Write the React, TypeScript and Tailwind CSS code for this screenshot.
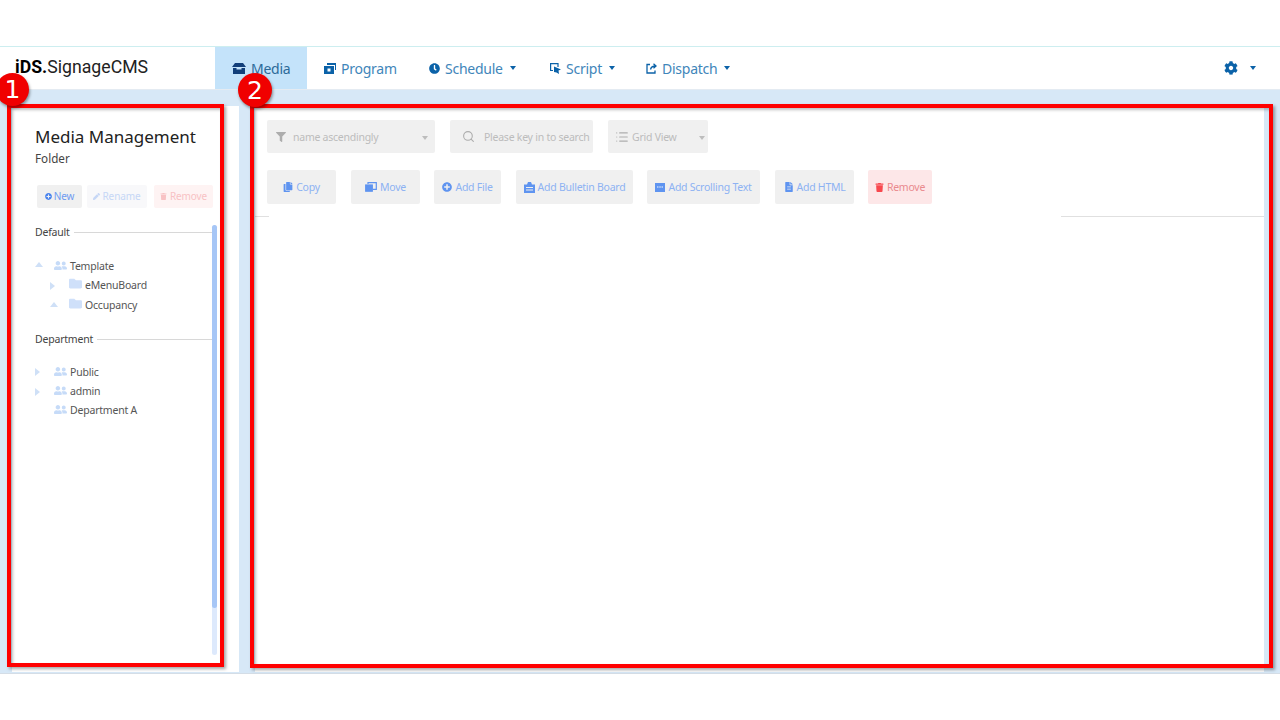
import React from 'react';
import { Search, List } from 'lucide-react';
import { FaClock, FaCog, FaCopy, FaFileAlt, FaFilter, FaFolder, FaPlusCircle, FaTrash, FaUserFriends, FaPen } from 'react-icons/fa';

const navItems = [
  { label: 'Program', caret: false, width: 'w-[105px]' },
  { label: 'Schedule', caret: true, width: 'w-[120px]' },
  { label: 'Script', caret: true, width: 'w-[97px]' },
  { label: 'Dispatch', caret: true, width: 'w-[110px]' },
];

const Caret = ({ className }: { className: string }) => (
  <span className={`inline-block h-0 w-0 shrink-0 border-x-[3.5px] border-t-[4px] border-x-transparent ${className}`} />
);

const TreeArrow = ({ dir }: { dir: 'up' | 'right' }) =>
  dir === 'up' ? (
    <span className="inline-block h-0 w-0 border-x-[4px] border-b-[5px] border-x-transparent border-b-[#cfe0f7]" />
  ) : (
    <span className="inline-block h-0 w-0 border-y-[4px] border-l-[5px] border-y-transparent border-l-[#cfe0f7]" />
  );

const MediaIcon = () => (
  <svg width="14" height="11" viewBox="0 0 14 11" fill="#123f7a" className="shrink-0">
    <path d="M3 0h8l3 4H0z" />
    <path d="M1 5h3.5v1.5h5V5H13v6H1z" />
  </svg>
);

const NavIcon = ({ label }: { label: string }) => {
  if (label === 'Program') {
    return (
      <svg width="12" height="11" viewBox="0 0 12 11" className="shrink-0 text-[#0b62a8]" fill="currentColor">
        <path d="M3 0h9v7h-1V2H3z" />
        <path d="M0 3h10v8H0zM3.5 5.500v3h3v-3z" fillRule="evenodd" />
      </svg>
    );
  }
  if (label === 'Schedule') return <FaClock size={11} className="shrink-0 text-[#0b62a8]" />;
  if (label === 'Script') {
    return (
      <svg width="11" height="11" viewBox="0 0 11 11" fill="none" className="ml-px shrink-0 text-[#0b62a8]">
        <path d="M3 7.500H.6V.6h7.400V4" stroke="currentColor" strokeWidth="1.2" />
        <path d="M4 3.500l7 3-2.500 1 .5 3.500-2.500-1.500L4 9z" fill="currentColor" />
      </svg>
    );
  }
  return (
    <svg width="11" height="11" viewBox="0 0 11 11" fill="none" stroke="currentColor" strokeWidth="1.3" className="shrink-0 text-[#0b62a8]">
      <path d="M4 1.500H1v8.500h8V7.500" />
      <path d="M4.500 6.500c.5-2.500 2-3.500 5-3.500M7.500.8L10 3 7.500 5.200" />
    </svg>
  );
};

const Bulletin = () => (
  <svg width="11" height="11" viewBox="0 0 11 11" fill="currentColor">
    <path d="M4 0h3l1 2.500h3V11H0V2.500h3z" />
    <path d="M2 5h7v1H2zM2 7.500h7v1H2z" fill="#f0f0f0" />
  </svg>
);

const Marquee = () => (
  <svg width="10" height="9" viewBox="0 0 10 9" fill="currentColor">
    <path d="M0 0h10v9H0z" />
    <path d="M2 3h1.500v2H2zM4.300 3h1.500v2H4.300zM6.500 3H8v2H6.500z" fill="#a9c6f7" />
  </svg>
);

const MoveIcon = () => (
  <svg width="12" height="10" viewBox="0 0 12 10" fill="none" stroke="currentColor" strokeWidth="1.2">
    <path d="M3 2V.7h8.300v6.600H8" />
    <rect x="0.700" y="3" width="6.600" height="6.200" fill="currentColor" />
  </svg>
);

const toolButtons = [
  { label: 'Copy', icon: <FaCopy size={10} />, width: 'w-[69px]', gap: 'mr-[15px]' },
  { label: 'Move', icon: <MoveIcon />, width: 'w-[69px]', gap: 'mr-[14px]' },
  { label: 'Add File', icon: <FaPlusCircle size={10} />, width: 'w-[67px]', gap: 'mr-[15px]' },
  { label: 'Add Bulletin Board', icon: <Bulletin />, width: 'w-[117px]', gap: 'mr-[14px]' },
  { label: 'Add Scrolling Text', icon: <Marquee />, width: 'w-[113px]', gap: 'mr-[15px]' },
  { label: 'Add HTML', icon: <FaFileAlt size={10} />, width: 'w-[79px]', gap: 'mr-[14px]' },
];

const App = () => {
  return (
    <div className="relative flex h-[720px] w-[1280px] flex-col overflow-hidden bg-white font-['Noto_Sans',sans-serif]">
      <div className="box-content h-[46px] shrink-0 border-b border-[#cdeef0]" />

      {/* top nav */}
      <div className="flex h-[43px] shrink-0 items-center border-b border-[#e4ebf2] bg-white">
        <div className="w-[215px] pb-[2px] pl-[15px] font-['Roboto',sans-serif] text-[17.7px] text-[#222]">
          <span className="font-bold text-black">iDS.</span>SignageCMS
        </div>
        <div className="flex h-full w-[92px] items-center gap-[5px] bg-[#c4e3fa] pl-[17px] text-[14px] tracking-[-0.25px] text-[#2c6a99]">
          <MediaIcon />
          Media
        </div>
        {navItems.map((item) => (
          <div key={item.label} className={`flex h-full items-center pl-[17px] text-[14px] tracking-[-0.25px] text-[#3f86ba] ${item.width}`}>
            <NavIcon label={item.label} />
            <span className="ml-[5px]">{item.label}</span>
            {item.caret && <Caret className="ml-[7px] border-t-[#0b62a8]" />}
          </div>
        ))}
        <div className="ml-auto flex items-center pr-[24px]">
          <FaCog size={14} className="text-[#0b62a8]" />
          <Caret className="ml-[12px] border-t-[#0b62a8]" />
        </div>
      </div>

      {/* body */}
      <div className="flex h-[584px] shrink-0 gap-[16px] border-b border-[#d4dde6] bg-[#d7e8f7] pb-px pl-[12px] pr-[16px] pt-[16px]">
        <aside className="relative flex w-[227px] flex-col bg-white pl-[23px] pt-[17px]">
          <h1 className="text-[17px] leading-[27px] text-[#222]">Media Management</h1>
          <p className="text-[11.700px] leading-[16px] text-[#444]">Folder</p>

          <div className="mt-[19px] flex text-[10px] tracking-[-0.1px]">
            <div className="ml-[2px] flex h-[23px] w-[45px] items-center justify-center gap-[2px] rounded-[2px] bg-[#f0f0f0] text-[#6f9bf0]">
              <FaPlusCircle size={7} className="text-[#4a84ee]" />
              New
            </div>
            <div className="ml-[5px] flex h-[23px] w-[60px] items-center justify-center gap-[2px] rounded-[2px] bg-[#f8f8fa] text-[#c6d7f6]">
              <FaPen size={7} />
              Rename
            </div>
            <div className="ml-[7px] flex h-[23px] w-[59px] items-center justify-center gap-[3px] rounded-[2px] bg-[#fef3f3] text-[#f8c2c4]">
              <FaTrash size={7} />
              Remove
            </div>
          </div>

          <div className="mt-[16px] flex items-center text-[10.500px] leading-[16px] tracking-[-0.2px] text-[#444]">
            Default
            <div className="ml-[4px] h-px w-[139px] bg-[#d8d8d8]" />
          </div>

          <div className="mt-[17px] flex flex-col text-[10.500px] tracking-[-0.2px] text-[#555]">
            <div className="flex h-[19px] items-center">
              <span className="flex w-[19px] -translate-y-[2px]"><TreeArrow dir="up" /></span>
              <FaUserFriends size={13} className="mr-[3px] -translate-y-px text-[#c6dbf8]" />
              Template
            </div>
            <div className="flex h-[19px] items-center pl-[15px]">
              <span className="flex w-[19px]"><TreeArrow dir="right" /></span>
              <FaFolder size={13} className="mr-[3px] -translate-y-[2px] text-[#cfe0fa]" />
              eMenuBoard
            </div>
            <div className="flex h-[21px] items-center pl-[15px]">
              <span className="flex w-[19px] -translate-y-[1px]"><TreeArrow dir="up" /></span>
              <FaFolder size={13} className="mr-[3px] -translate-y-[2px] text-[#cfe0fa]" />
              Occupancy
            </div>
          </div>

          <div className="mt-[15px] flex items-center text-[10.500px] leading-[16px] tracking-[-0.2px] text-[#444]">
            Department
            <div className="ml-[4px] h-px w-[116px] bg-[#d8d8d8]" />
          </div>

          <div className="mt-[16px] flex flex-col text-[10.500px] tracking-[-0.2px] text-[#555]">
            <div className="flex h-[19px] items-center">
              <span className="flex w-[19px] -translate-y-[1px]"><TreeArrow dir="right" /></span>
              <FaUserFriends size={13} className="mr-[3px] -translate-y-px text-[#c6dbf8]" />
              Public
            </div>
            <div className="flex h-[19px] items-center">
              <span className="flex w-[19px]"><TreeArrow dir="right" /></span>
              <FaUserFriends size={13} className="mr-[3px] -translate-y-px text-[#c6dbf8]" />
              admin
            </div>
            <div className="flex h-[19px] items-center pl-[19px]">
              <FaUserFriends size={13} className="mr-[3px] -translate-y-px text-[#c6dbf8]" />
              Department A
            </div>
          </div>

          {/* scroll bar */}
          <div className="absolute left-[200px] top-[119px] h-[430px] w-[5px] rounded-full bg-[#dde9fc]">
            <div className="h-[383px] w-full rounded-full bg-[#a6c6f6]" />
          </div>
        </aside>

        <main className="flex flex-1 flex-col bg-white pl-[12px] pt-[14px]">
          <div className="flex h-[33px] text-[10.500px] tracking-[-0.25px] text-[#bcbcbc]">
            <div className="flex h-full w-[168px] items-center rounded-[2px] bg-[#f0f0f0] pl-[9px] pt-[2px]">
              <FaFilter size={10} className="-translate-y-px shrink-0 text-[#adadad]" />
              <span className="ml-[7px]">name ascendingly</span>
              <Caret className="ml-auto mr-[7px] border-t-[#bdbdbd]" />
            </div>
            <div className="ml-[15px] flex h-full w-[143px] items-center rounded-[2px] bg-[#f0f0f0] pl-[12px] pt-[2px]">
              <Search size={13} className="-translate-y-px shrink-0 text-[#adadad]" />
              <span className="ml-[9px] whitespace-nowrap">Please key in to search</span>
            </div>
            <div className="ml-[15px] flex h-full w-[100px] items-center rounded-[2px] bg-[#f0f0f0] pl-[7px] pt-[2px]">
              <List size={14} className="-translate-y-px shrink-0 text-[#adadad]" />
              <span className="ml-[3px]">Grid View</span>
              <Caret className="ml-auto mr-[3px] border-t-[#bdbdbd]" />
            </div>
          </div>

          <div className="mt-[17px] flex h-[34px] text-[10.500px] tracking-[-0.25px]">
            {toolButtons.map((b) => (
              <div
                key={b.label}
                className={`flex h-full items-center justify-center gap-[3px] rounded-[2px] bg-[#f0f0f0] pt-[2px] text-[#8db2f3] ${b.width} ${b.gap}`}
              >
                <span className="flex -translate-y-px text-[#5f94f0]">{b.icon}</span>
                {b.label}
              </div>
            ))}
            <div className="flex h-full w-[64px] items-center justify-center gap-[3px] rounded-[2px] bg-[#fde7e8] pt-[2px] text-[#ea8a8e]">
              <FaTrash size={9} className="-translate-y-px text-[#f8484e]" />
              Remove
            </div>
          </div>

          <div className="mt-[12px] flex">
            <div className="ml-[-12px] h-px w-[14px] bg-[#e0e0e0]" />
            <div className="ml-[792px] h-px w-[203px] bg-[#e0e0e0]" />
          </div>
        </main>
      </div>

      {/* red callouts over the page */}
      <div className="absolute left-[7px] top-[104px] h-[563px] w-[217px] border-4 border-[#ff0000] shadow-[2px_2px_3px_rgba(0,0,0,0.35),inset_2px_2px_3px_rgba(0,0,0,0.25)]" />
      <div className="absolute left-[250px] top-[104px] h-[564px] w-[1023px] border-4 border-[#ff0000] shadow-[2px_2px_3px_rgba(0,0,0,0.35),inset_2px_2px_3px_rgba(0,0,0,0.25)]" />
      <div className="absolute left-[-4px] top-[73px] flex h-[33px] w-[33px] items-center justify-center rounded-full bg-[#f00000] font-['DejaVu_Sans',sans-serif] text-[25px] leading-none text-white shadow-[1px_2px_3px_rgba(0,0,0,0.4)]">
        1
      </div>
      <div className="absolute left-[238px] top-[73px] flex h-[34px] w-[34px] items-center justify-center rounded-full bg-[#f00000] font-['DejaVu_Sans',sans-serif] text-[25px] leading-none text-white shadow-[1px_2px_3px_rgba(0,0,0,0.4)]">
        2
      </div>
    </div>
  );
};

export default App;
